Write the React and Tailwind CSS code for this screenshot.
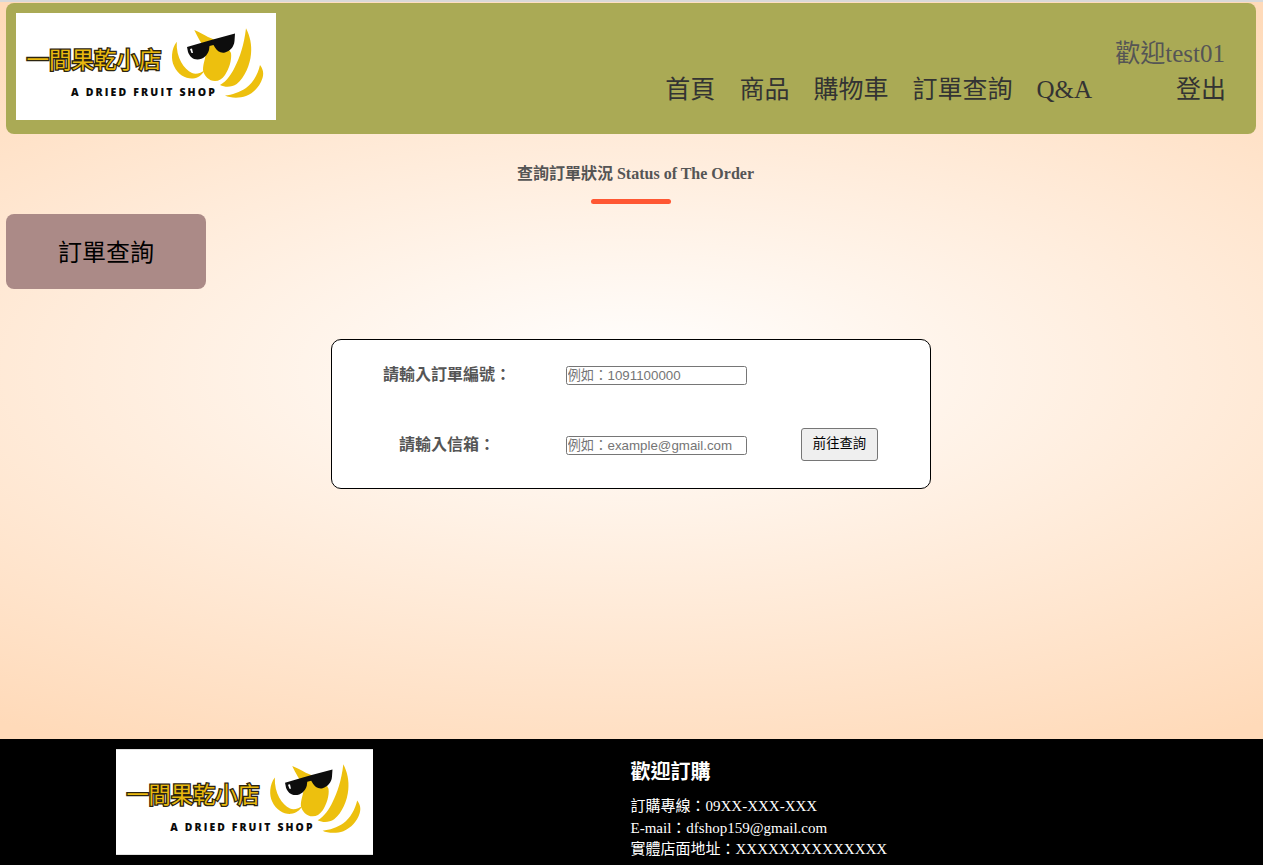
const serif = "font-['Liberation_Serif','Noto_Sans_CJK_TC',serif]";

// logo drawing, shared by header and footer
const Logo = ({ className }) => (
  <svg viewBox="0 0 260 107" className={className}>
    <rect width="260" height="107" fill="#ffffff" />
    <text
      x="10.5"
      y="55"
      fontFamily="'Noto Sans CJK TC', sans-serif"
      fontSize="22.5"
      fontWeight="400"
      fill="#e8b90f"
      stroke="#2b2410"
      strokeWidth="2.6"
      paintOrder="stroke"
    >
      一間果乾小店
    </text>
    <text
      x="55"
      y="83"
      fontFamily="'Open Sans', sans-serif"
      fontSize="10.5"
      fontWeight="800"
      letterSpacing="2.15"
      fill="#0b0b0b"
    >
      A DRIED FRUIT SHOP
    </text>
    {/* banana peels */}
    <path d="M160.7 28.7 C155 36 155 47 158 53 C162 62 170 66 177 65.5 C182 65 186 62 189 57 C185 60 180 62 176 60 C168 56 160 45 160.7 28.7Z" fill="#edc00e" />
    <path d="M178.3 17 C183 19 187 21 192 24 C202 28 212 33 215 40 C216 47 213 56 209 62 C206 66 203 68 199 68 C193 68 188 63 187 57 C187 50 190 45 189.5 40 C189 35 186 31 184 28 C182 24 180 21 178.3 17Z" fill="#edc00e" />
    <path d="M230 15.3 C234 23 236 32 235 41 C234 52 229 64 220.7 71 C216 74 210 75 204 72 C211 68 216 60 219 53.7 C224 44 228 32 230 15.3Z" fill="#edc00e" />
    <path d="M244 52 C247 56 248 60 246.5 65 C244 73 238 80 230 83 C223 85.5 214 85 209 82.5 C216 82 224 79 230 75 C237 70 242 61 244 52Z" fill="#edc00e" />
    {/* sunglasses */}
    <path d="M171 34 L190 28.5 L197 26.5 L219 20.5 L218.5 28 C218 34 214 38 209 39.5 C204.5 40.5 201 38 199 34.5 L197.5 32 L193.5 33 L193 37 C191.5 42.5 187 46.5 181.5 46.5 C176.5 46.5 173.5 43 172 39Z" fill="#0d0d0d" />
    <path d="M174 36 L176 35.5 L177 40 L175.5 40Z" fill="#ffffff" />
  </svg>
);

const navItems = ["首頁", "商品", "購物車", "訂單查詢", "Q&A"];

const inputClass =
  "h-[19px] w-[181px] rounded-[2.5px] border border-[#767676] bg-white pl-[0.5px] pt-px text-[13.33px] font-['Liberation_Sans','Noto_Sans_CJK_TC',sans-serif] placeholder:text-[#757575]";

export default function App() {
  return (
    <div className={`min-h-screen flex flex-col ${serif}`}>
      <div className="flex-1 flex flex-col pr-px border-t-2 border-[#d9d9d9] bg-[radial-gradient(ellipse_1100px_430px_at_50%_50%,#ffffff,#ffdab9)] h-[739px]">
        {/* Header */}
        <header className="mx-[6px] mt-px h-[131px] flex justify-between rounded-lg bg-[#aaaa55] pl-[10px] pr-[30px] pt-[10px]">
          <Logo className="w-[260px] h-[107px]" />
          <div className="text-right text-[25px] leading-[36px] pt-[23px] text-[#333333]">
            <p className="text-[#555555] mr-px">歡迎test01</p>
            <nav className="flex">
              <div className="flex gap-[24px]">
                {navItems.map((item) => (
                  <a key={item}>{item}</a>
                ))}
              </div>
              <a className="ml-[84px]">登出</a>
            </nav>
          </div>
        </header>

        {/* Title */}
        <div className="flex flex-col items-center pt-[29px]">
          <h2 className="text-base leading-[22px] font-bold text-[#555555] translate-x-[4.5px]">
            查詢訂單狀況 Status of The Order
          </h2>
          <div className="mt-[14px] h-[5px] w-[80px] rounded-sm bg-[#ff5733]"></div>
        </div>

        <div className="mt-[10px] ml-[6px] w-[200px] h-[75px] pt-[3px] flex items-center justify-center rounded-lg bg-[#ab8a87] text-2xl text-black font-['Liberation_Sans','Noto_Sans_CJK_TC',sans-serif]">
          訂單查詢
        </div>

        {/* Query form */}
        <form className="mt-[50px] mx-auto w-[600px] h-[150px] rounded-[10px] border border-black bg-white grid grid-cols-[234px_181px_1fr] grid-rows-[70px_70px] items-center">
          <label className="text-center pr-[4px] font-bold text-[#555555]">請輸入訂單編號：</label>
          <input placeholder="例如：1091100000" className={inputClass} />
          <div></div>
          <label className="text-center pr-[4px] font-bold text-[#555555]">請輸入信箱：</label>
          <input placeholder="例如：example@gmail.com" className={inputClass} />
          <button
            type="button"
            className="ml-[54px] mt-[-2px] w-[77px] h-[33px] rounded-[3px] border border-[#767676] bg-[#efefef] text-[13.33px] text-black font-['Liberation_Sans','Noto_Sans_CJK_TC',sans-serif]"
          >
            前往查詢
          </button>
        </form>
      </div>

      {/* Footer */}
      <footer className="h-[126px] bg-black text-white flex pt-[10px]">
        <div className="w-[630.5px] pl-[116px]">
          <Logo className="w-[257px] h-[106px]" />
        </div>
        <div className="pt-[11px]">
          <h3 className="text-xl font-bold leading-[24px] mb-[12px] font-['Liberation_Sans','Noto_Sans_CJK_TC',sans-serif]">歡迎訂購</h3>
          <p className="text-[15px] leading-[21.5px]">訂購專線：09XX-XXX-XXX</p>
          <p className="text-[15px] leading-[21.5px]">E-mail：dfshop159@gmail.com</p>
          <p className="text-[15px] leading-[21.5px]">實體店面地址：XXXXXXXXXXXXXX</p>
        </div>
      </footer>
    </div>
  );
}
